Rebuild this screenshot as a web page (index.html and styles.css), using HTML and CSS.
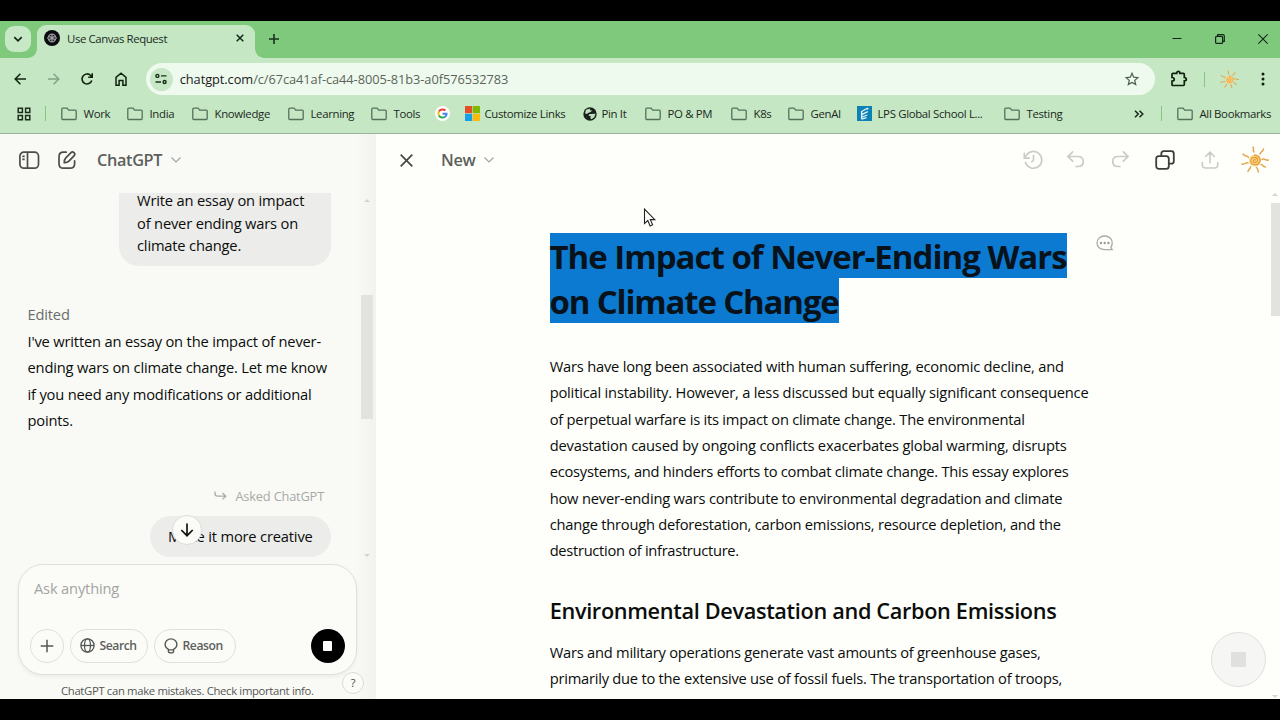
FILE: index.html
```html
<!DOCTYPE html>
<html lang="en">
<head>
<meta charset="utf-8">
<title>Use Canvas Request</title>
<link rel="stylesheet" href="styles.css">
</head>
<body>
<svg class="defs" aria-hidden="true">
  <symbol id="folder" viewBox="0 0 16 14"><path d="M1.7 1.2h4.4l1.6 1.9h6.6q.9 0 .9.9v7.6q0 .9-.9.9H1.700q-.9 0-.9-.9V2.100q0-.9.9-.9z" fill="none" stroke="#56705a" stroke-width="1.3"/></symbol>
  <symbol id="sun" viewBox="0 0 28 28">
    <circle cx="14" cy="14.500" r="6" fill="#fbd588"/>
    <path d="M14.300 14.500c.5-1.300-1.800-1.400-2 .1-.2 2.300 3.900 2.600 4.300-.2.300-3.500-5.700-4.300-6.700-.3-.8 4.900 6.900 6.400 8.800 1.900 1.600-4.400-2-7.300-5.600-6.900" fill="none" stroke="#e59f37" stroke-width="1.200"/>
    <path d="M13 6c-2-2 .6-2.600-1-5M19 8c.5-2.500 2.500-1.500 3.500-5M21 13.500c2.500-2 3.500 1.500 6.500.5M20 18.500c2 0 1.500 2.500 4.500 2.500M15.500 21.500c2 1.500.5 2.500 2 4.500M9.500 20.500c.500 2.500-2 2-2.500 5M7 17c-2.500-1-3 2-6 1M7.500 11.500c-1-2.500-3.500-.5-5.500-3.500" fill="none" stroke="#dfaa57" stroke-width="1.500" stroke-linecap="round"/>
  </symbol>
  <symbol id="chev" viewBox="0 0 12 8"><path d="M1.500 1.500 6 6l4.500-4.500" fill="none" stroke="currentColor" stroke-width="1.200"/></symbol>
</svg>

<div class="screen">
  <header class="tabstrip">
    <div class="tabsearch"><svg width="10" height="7" viewBox="0 0 10 7"><path d="M1.300 1.200 5 4.900l3.700-3.700" fill="none" stroke="#112513" stroke-width="1.700"/></svg></div>
    <div class="tab">
      <svg class="favicon" width="16" height="16" viewBox="0 0 16 16"><circle cx="8" cy="8" r="8" fill="#0c0c10"/><g fill="none" stroke="#a9aaae" stroke-width=".7"><ellipse cx="8" cy="6" rx="3.200" ry="1.900"/><ellipse cx="8" cy="6" rx="3.200" ry="1.900" transform="rotate(60 8 8)"/><ellipse cx="8" cy="6" rx="3.200" ry="1.900" transform="rotate(120 8 8)"/><ellipse cx="8" cy="6" rx="3.200" ry="1.900" transform="rotate(180 8 8)"/><ellipse cx="8" cy="6" rx="3.200" ry="1.900" transform="rotate(240 8 8)"/><ellipse cx="8" cy="6" rx="3.200" ry="1.900" transform="rotate(300 8 8)"/></g></svg>
      <span class="tab-title">Use Canvas Request</span>
      <svg class="tab-close" width="8" height="8" viewBox="0 0 8 8"><path d="m.7.7 6.600 6.600m0-6.600L.7 7.300" stroke="#14281a" stroke-width="1.500"/></svg>
    </div>
    <svg class="newtab" width="10" height="10" viewBox="0 0 10 10"><path d="M5 0v10M0 5h10" stroke="#17331a" stroke-width="1.600"/></svg>
    <div class="winctl">
      <svg width="10" height="10" viewBox="0 0 10 10"><path d="M.5 4.500h9" stroke="#142517"/></svg>
      <svg width="10" height="10" viewBox="0 0 10 10" fill="none" stroke="#142517" stroke-width="1.200"><rect x=".6" y="2.400" width="7" height="7" rx="1"/><path d="M2.700 2.200V.7h5.200q1.400 0 1.400 1.400v5.300H7.700"/></svg>
      <svg width="10" height="10" viewBox="0 0 10 10"><path d="m.4.4 9.200 9.200m0-9.200L.4 9.600" stroke="#142517" stroke-width="1.100"/></svg>
    </div>
  </header>

  <div class="toolbar">
    <svg width="12" height="12" viewBox="0 0 12 12" fill="none" stroke="#10230f" stroke-width="1.500"><path d="M12 6H1.200M6.400.800 1.200 6l5.200 5.200"/></svg>
    <svg width="12" height="12" viewBox="0 0 12 12" fill="none" stroke="#84a486" stroke-width="1.500"><path d="M0 6h10.800M5.600.800 10.800 6l-5.200 5.200"/></svg>
    <svg width="12" height="12" viewBox="0 0 12 12" fill="none" stroke="#10230f" stroke-width="1.600"><path d="M10.800 7.500A5 5 0 1 1 9.700 2.500l1.400 1.600M11.200.300v4H7.200"/></svg>
    <svg width="12" height="14" viewBox="0 0 12 14" fill="none" stroke="#10230f" stroke-width="1.500"><path d="M1 5.300 6 1.200l5 4.100v7.900H7.900V8.500H4.100v4.700H1z"/></svg>
    <div class="omnibox">
      <span class="site"><svg width="12" height="12" viewBox="0 0 12 12" fill="none" stroke="#17301b" stroke-width="1.400"><circle cx="2.400" cy="2.900" r="1.500"/><path d="M6 2.900h5.500M.500 9h5.500"/><circle cx="9.600" cy="9" r="1.500"/></svg></span>
      <span class="url">chatgpt.com<span class="path">/c/67ca41af-ca44-8005-81b3-a0f576532783</span></span>
      <svg class="star" width="14" height="14" viewBox="0 0 14 14"><path d="m7 1.300 1.700 3.900 4.200.4-3.200 2.800 1 4.200L7 10.400l-3.700 2.200 1-4.200L1.100 5.600l4.200-.4z" fill="none" stroke="#4b5e4d" stroke-width="1.200"/></svg>
    </div>
    <svg class="puzzle" width="16" height="16" viewBox="0 0 16 16"><path d="M1 3.200q0-.9.900-.9h3.800c0-2.500 3.200-2.500 3.200 0h3.500q.9 0 .9.900v3.300c2.700 0 2.700 3.300 0 3.300v3.800q0 .9-.9.900H1.900q-.9 0-.9-.9v-3.400c3 0 3-3.700 0-3.700z" fill="none" stroke="#10200f" stroke-width="1.700"/></svg>
    <i class="sep"></i>
    <svg class="profile" width="19" height="19"><use href="#sun"/></svg>
    <svg class="kebab" width="4" height="14" viewBox="0 0 4 14" fill="#10200f"><circle cx="2" cy="2" r="1.500"/><circle cx="2" cy="7" r="1.500"/><circle cx="2" cy="12" r="1.500"/></svg>
  </div>

  <nav class="bookmarks">
    <svg width="14" height="14" viewBox="0 0 14 14" fill="none" stroke="#1b2c1d" stroke-width="1.500"><path d="M1.200 1.200h4.200v4.200H1.200zM8.600 1.200h4.200v4.200H8.600zM1.200 8.600h4.200v4.200H1.200zM8.600 8.600h4.200v4.200H8.600z"/></svg>
    <i class="sep"></i>
    <a><svg width="16" height="14"><use href="#folder"/></svg>Work</a>
    <a><svg width="16" height="14"><use href="#folder"/></svg>India</a>
    <a><svg width="16" height="14"><use href="#folder"/></svg>Knowledge</a>
    <a><svg width="16" height="14"><use href="#folder"/></svg>Learning</a>
    <a><svg width="16" height="14"><use href="#folder"/></svg>Tools</a>
    <a class="google"><svg width="15" height="15" viewBox="0 0 15 15"><circle cx="7.500" cy="7.500" r="7.500" fill="#fff"/><g fill="none" stroke-width="2"><path d="M10.400 4.600A4.200 4.200 0 0 0 3.900 5.600" stroke="#e94235"/><path d="M3.900 5.500a4.200 4.200 0 0 0 0 4" stroke="#fabb05"/><path d="M3.900 9.500a4.200 4.200 0 0 0 6.200 1.200" stroke="#34a853"/><path d="M10 10.800a4 4 0 0 0 1.600-3.100H7.600" stroke="#4285f4"/></g></svg></a>
    <a><svg width="15" height="15" viewBox="0 0 15 15"><path fill="#e44e28" d="M0 0h7.200v7.200H0z"/><path fill="#7fba00" d="M7.800 0H15v7.200H7.800z"/><path fill="#17a2e8" d="M0 7.800h7.200V15H0z"/><path fill="#fab90b" d="M7.800 7.800H15V15H7.800z"/></svg>Customize Links</a>
    <a class="pin"><svg width="14" height="14" viewBox="0 0 14 14"><circle cx="7" cy="7" r="6.700" fill="#1a201c"/><path d="M3 2.700 7.200 1.400l-.4 1.800 2.500.4-1.800 1.500-2.300.9L3.800 7 2 6.200zM8 7l4.500-.3-1.200 3.500-2.800 2-1.300-1.300.7-1.600-2.300-.6L6.100 7.200z" fill="#bfe0bf"/></svg>Pin It</a>
    <a><svg width="16" height="14"><use href="#folder"/></svg>PO &amp; PM</a>
    <a><svg width="16" height="14"><use href="#folder"/></svg>K8s</a>
    <a><svg width="16" height="14"><use href="#folder"/></svg>GenAI</a>
    <a class="lps"><svg width="15" height="15" viewBox="0 0 15 15"><path fill="#0d82b4" d="M0 0h15v15H0z"/><path d="M5 5.300 10.800 2M5 8.300l5.800-2.600M5 11l5.300-2M4.500 13.200l5-1.500M4.600 5v8M10.800 2v1.500" stroke="#e4f5fb" stroke-width="1.300"/></svg>LPS Global School L...</a>
    <a><svg width="16" height="14"><use href="#folder"/></svg>Testing</a>
    <svg width="10" height="8" viewBox="0 0 10 8" fill="none" stroke="#16281a" stroke-width="1.500"><path d="m1 .7 3.300 3.300L1 7.300M5.500.700l3.300 3.300-3.300 3.300"/></svg>
    <i class="sep"></i>
    <a><svg width="16" height="14"><use href="#folder"/></svg>All Bookmarks</a>
  </nav>

  <main class="page">
    <section class="chat">
      <div class="chat-head">
        <svg width="22" height="20" viewBox="0 0 22 20" fill="none" stroke="#4b4d4a" stroke-width="1.700"><rect x="1.900" y="2.200" width="18.600" height="16" rx="4"/><path d="M9.500 2.300v16M4.300 6.300h2.400M4.300 9.300h2.400"/></svg>
        <svg class="edit" width="20" height="20" viewBox="0 0 20 20" fill="none" stroke="#4b4d4a" stroke-width="1.700" stroke-linecap="round"><path d="M9.200 2.200H6.500Q2 2.200 2 6.700v7Q2 18.200 6.500 18.200h6.600q4.500 0 4.500-4.500v-2.800"/><path d="M7.300 12.700c-.2-3 .3-3.700 1.500-4.900L14 2.600c1.900-1.700 5 .9 3.200 3.100l-5.300 5.500c-1.200 1.200-2.200 1.600-4.600 1.500z"/></svg>
        <span class="model">ChatGPT</span>
        <svg class="chev" width="12" height="8"><use href="#chev"/></svg>
      </div>
      <div class="thread">
        <div class="bubble first"><span>Write an essay on impact</span><span>of never ending wars on</span><span>climate change.</span></div>
        <div class="edited">Edited</div>
        <p class="reply"><span>I've written an essay on the impact of never-</span><span>ending wars on climate change. Let me know</span><span>if you need any modifications or additional</span><span>points.</span></p>
        <div class="asked"><svg width="13" height="10" viewBox="0 0 13 10" fill="none" stroke="#a9aba8" stroke-width="1.300"><path d="M1 .5v2.300q0 2.400 2.400 2.400h8M8.500 2l3.300 3.200-3.300 3.200"/></svg>Asked ChatGPT</div>
        <div class="bubble second">Make it more creative</div>
        <div class="down"><svg width="14" height="14" viewBox="0 0 14 14" fill="none" stroke="#111" stroke-width="1.700"><path d="M7 .500v12M1.300 7 7 12.700 12.700 7"/></svg></div>
        <i class="arrow up"></i><i class="thumb"></i><i class="arrow dn"></i>
      </div>
      <div class="composer">
        <div class="placeholder">Ask anything</div>
        <div class="actions">
          <span class="pill plus"><svg width="14" height="14" viewBox="0 0 14 14"><path d="M7 .700v12.600M.700 7h12.600" stroke="#555755" stroke-width="1.500"/></svg></span>
          <span class="pill search"><svg width="15" height="15" viewBox="0 0 15 15" fill="none" stroke="#555755" stroke-width="1.300"><circle cx="7.500" cy="7.500" r="6.600"/><ellipse cx="7.500" cy="7.500" rx="3" ry="6.600"/><path d="M1 7.500h13"/></svg>Search</span>
          <span class="pill reason"><svg width="14" height="16" viewBox="0 0 14 16" fill="none" stroke="#555755" stroke-width="1.400"><path d="M4.400 11.300C2 10 1.100 8.300 1.100 6.500 1.100 3.300 3.700.9 7 .9s5.900 2.400 5.900 5.600c0 1.800-.9 3.500-3.300 4.800v1.900q0 1.700-2.600 1.700t-2.600-1.700zM4.600 11.900h4.800"/></svg>Reason</span>
          <span class="stop"></span>
        </div>
      </div>
      <div class="disclaimer">ChatGPT can make mistakes. Check important info.</div>
      <div class="help">?</div>
    </section>

    <section class="canvas">
      <div class="canvas-head">
        <svg width="13" height="13" viewBox="0 0 13 13"><path d="m.7.7 11.600 11.600m0-11.600L.7 12.300" stroke="#454745" stroke-width="1.700"/></svg>
        <span class="doc">New</span>
        <svg class="chev" width="12" height="8"><use href="#chev"/></svg>
        <div class="tools">
          <svg width="20" height="20" viewBox="0 0 20 20" fill="none" stroke="#c9cbc8" stroke-width="1.600" stroke-linecap="round"><path d="M2.400 12.400A8.400 8.400 0 1 0 3.200 5.500L1.400 7.900M1.300 3.200v4.900h5M10.500 5.600v4.200q0 1.200-1.800 2"/></svg>
          <svg width="20" height="20" viewBox="0 0 20 20" fill="none" stroke="#c9cbc8" stroke-width="1.700" stroke-linecap="round"><path d="M6.600 1.900 2 6.500l4.600 4.600M2 6.500h9.700q5.600 0 5.600 5t-5.600 5h-1.600"/></svg>
          <svg width="20" height="20" viewBox="0 0 20 20" fill="none" stroke="#c9cbc8" stroke-width="1.700" stroke-linecap="round"><path d="m13.400 1.900 4.600 4.600-4.600 4.600M18 6.500H8.300q-5.600 0-5.600 5t5.600 5h1.600"/></svg>
          <svg width="20" height="20" viewBox="0 0 20 20" fill="none" stroke="#3c3e3c" stroke-width="1.800"><rect x="1.200" y="6.200" width="12.600" height="12.600" rx="2.600"/><path d="M6.300 6V3.700q0-2.500 2.500-2.500h7.500q2.500 0 2.500 2.500v7.500q0 2.500-2.500 2.500H14"/></svg>
          <svg width="20" height="20" viewBox="0 0 20 20" fill="none" stroke="#c9cbc8" stroke-width="1.600" stroke-linecap="round"><path d="M10 12.700V2.400M5.600 6.500 10 2.100l4.400 4.400M2.300 12.500v2.200q0 3.300 3.300 3.300h8.800q3.300 0 3.300-3.300v-2.200"/></svg>
          <svg class="avatar" width="28" height="28"><use href="#sun"/></svg>
        </div>
      </div>
      <article>
        <h1><span>The Impact of Never-Ending Wars</span><br><span>on Climate Change</span></h1>
        <p class="one"><span>Wars have long been associated with human suffering, economic decline, and</span><span>political instability. However, a less discussed but equally significant consequence</span><span>of perpetual warfare is its impact on climate change. The environmental</span><span>devastation caused by ongoing conflicts exacerbates global warming, disrupts</span><span>ecosystems, and hinders efforts to combat climate change. This essay explores</span><span>how never-ending wars contribute to environmental degradation and climate</span><span>change through deforestation, carbon emissions, resource depletion, and the</span><span>destruction of infrastructure.</span></p>
        <h2>Environmental Devastation and Carbon Emissions</h2>
        <p class="two"><span>Wars and military operations generate vast amounts of greenhouse gases,</span><span>primarily due to the extensive use of fossil fuels. The transportation of troops,</span></p>
      </article>
      <svg class="comment" width="18" height="16" viewBox="0 0 18 16" fill="none" stroke="#a9aba9" stroke-width="1.300"><path d="M16.200 14.700H8.800C4 14.700 1 11.700 1 8s3-7 7.600-7 7.600 3.200 7.600 7c0 2-.7 3.500-1.400 4.400z"/><g fill="#999b99" stroke="none"><circle cx="5" cy="8" r="1.200"/><circle cx="8.700" cy="8" r="1.200"/><circle cx="12.400" cy="8" r="1.200"/></g></svg>
      <svg class="cursor" width="14" height="20" viewBox="0 0 14 20"><path d="M1.500 1v14.600l3.300-3.100 2.300 5.400 2.500-1.100-2.300-5.200h4.500z" fill="#fff" stroke="#222" stroke-width="1.100"/></svg>
      <div class="fab"></div>
      <i class="arrow up"></i><i class="thumb"></i><i class="arrow dn"></i>
    </section>
  </main>
</div>
</body>
</html>
```
FILE: styles.css
```css
* { box-sizing: border-box; }
body { margin: 0; width: 1280px; height: 720px; overflow: hidden; background: #000; color: #111; font-family: "Open Sans", "Noto Sans", sans-serif; }
svg { display: block; flex: none; overflow: visible; }
.defs { position: absolute; width: 0; height: 0; }
.screen { margin-top: 21px; height: 678px; display: flex; flex-direction: column; overflow: hidden; }

/* tab strip */
.tabstrip { height: 37px; background: #7fc97c; display: flex; align-items: center; padding: 0 0 1px 5px; }
.tabsearch { width: 26px; height: 26px; border-radius: 9px; background: #c6e8c5; display: flex; align-items: center; justify-content: center; }
.tab { position: relative; margin-left: 6px; width: 218px; height: 33px; margin-top: 5px; background: #c6e7c4; border-radius: 9px 9px 0 0; display: flex; align-items: center; padding: 0 11px 7px 7px; }
.tab::before, .tab::after { content: ""; position: absolute; bottom: 0; width: 9px; height: 9px; }
.tab::before { left: -9px; background: radial-gradient(circle at 0 0, transparent 8.500px, #c6e7c4 9px); }
.tab::after { right: -9px; background: radial-gradient(circle at 100% 0, transparent 8.500px, #c6e7c4 9px); }
.tab-title { margin-left: 7px; flex: 1; font-size: 11.400px; letter-spacing: -.4px; color: #1a2b1c; white-space: nowrap; }
.newtab { margin-left: 14px; }
.winctl { margin-left: auto; display: flex; gap: 33px; padding-right: 12px; }

/* toolbar */
.toolbar { height: 43px; background: #c6e7c4; display: flex; align-items: center; padding: 0 0 1px 14px; gap: 21.700px; }
.omnibox { width: 1009px; height: 32px; border-radius: 16px; background: #eefaee; display: flex; align-items: center; padding: 0 16px 0 4px; margin-left: -3px; }
.site { width: 23px; height: 23px; border-radius: 50%; background: #c8e7c7; display: grid; place-items: center; }
.url { margin-left: 7px; flex: 1; font-size: 12.800px; letter-spacing: -.06px; color: #1a211a; }
.path { color: #5b655b; }
.sep { width: 1px; height: 15px; background: #86c585; }
.toolbar .puzzle { margin-left: -5px; }
.toolbar .sep { margin-left: -5px; }
.toolbar .profile { margin-left: -7px; }
.toolbar .kebab { margin-left: 0; }

/* bookmarks */
.bookmarks { height: 33px; background: #c6e7c4; border-bottom: 1px solid #97b595; display: grid; align-items: center; padding: 0 0 7px 16.500px; font-size: 11.400px; letter-spacing: -.33px; color: #1b291c; white-space: nowrap;
  grid-template-columns: 28px 16px 66px 65px 96px 83px 65px 29px 118px 62px 86px 57px 69px 147px 130px 27px 16px 103px; }
.bookmarks a { display: flex; align-items: center; gap: 7px; }
.bookmarks .google { margin-left: -1px; }
.bookmarks .pin, .bookmarks a:nth-of-type(7) { gap: 5px; }
.bookmarks .lps { gap: 6px; }

/* page */
.page { flex: 1; min-height: 0; display: flex; background: #fefffb; }
.chat { position: relative; width: 376px; background: linear-gradient(90deg, #f9faf6 355px, #f2f3ef 376px); }
.chat-head { height: 59px; display: flex; align-items: center; padding: 0 0 7px 18px; }
.chat-head .edit { margin-left: 17px; }
.model, .doc { font-size: 16.300px; font-weight: 600; color: #5d5f5c; letter-spacing: -.35px; }
.model { margin-left: 20px; }
.chev { color: #a2a4a1; margin-left: 8px; }
.thread { position: relative; height: 371px; font-size: 14.700px; color: #0b0d0b; letter-spacing: -.18px; }
.bubble { background: #ececea; }
.bubble span, article p span, .reply span { display: block; white-space: nowrap; }
.first { width: 212px; height: 73px; margin-left: 119px; border-radius: 0 0 20px 20px; padding: 0 0 0 18px; line-height: 22.600px; }
.first span { position: relative; top: -4px; }
.edited { margin: 36px 0 0 27.500px; line-height: 24px; color: #6b6d6a; }
.reply { margin: 2px 0 0 27.500px; line-height: 26.300px; }
.asked { display: flex; align-items: center; justify-content: flex-end; gap: 8px; margin: 53px 52px 0 0; line-height: 20px; font-size: 12.800px; color: #a7a9a6; }
.second { width: 181px; height: 41px; line-height: 41px; border-radius: 21px; margin: 10px 0 0 150px; padding-left: 18px; white-space: nowrap; }
.down { position: absolute; left: 172px; top: 322px; width: 30px; height: 30px; border-radius: 50%; border: 1px solid #dcddda; background: #fbfcf8; display: grid; place-items: center; }
.thumb { position: absolute; width: 12px; background: #e2e3df; }
.arrow { position: absolute; width: 0; height: 0; border: 3.500px solid transparent; }
.arrow.up { border-bottom-color: #d3d4d1; border-top: 0; }
.arrow.dn { border-top-color: #d3d4d1; border-bottom: 0; }
.thread .arrow { left: 364px; }
.thread .up { top: 6px; }
.thread .dn { bottom: 7px; }
.thread .thumb { left: 361px; top: 102px; height: 124px; }
.composer { position: relative; width: 339px; height: 111px; margin-left: 18px; border: 1px solid #dfe0dd; border-radius: 25px; background: #fbfcf8; box-shadow: 0 2px 4px #0000000f; padding: 13px 11.500px 11px 11px; display: flex; flex-direction: column; justify-content: space-between; }
.placeholder { padding-left: 4px; font-size: 14.700px; line-height: 21px; letter-spacing: -.18px; color: #a3a5a2; }
.actions { display: flex; align-items: center; gap: 5.500px; }
.pill { height: 34px; border: 1px solid #dfe0dd; border-radius: 17px; display: flex; align-items: center; gap: 5px; font-size: 12.200px; font-weight: 600; letter-spacing: -.45px; color: #5d5f5c; padding: 0 0 1px 9px; }
.plus { width: 34px; }
.search { width: 78px; }
.reason { width: 82px; margin-left: .5px; }
.stop { width: 34px; height: 34px; border-radius: 50%; background: #000; margin-left: auto; display: grid; place-items: center; }
.stop::after { content: ""; width: 9px; height: 10px; background: #fff; border-radius: 1px; }
.disclaimer { margin: 8px 0 0 61px; font-size: 11.300px; line-height: 16px; letter-spacing: -.33px; color: #555755; white-space: nowrap; }
.help { position: absolute; left: 342px; top: 538px; width: 22px; height: 22px; border-radius: 50%; border: 1px solid #dcddda; background: #fbfcf8; font-size: 11px; line-height: 20px; text-align: center; color: #3f413f; }

.canvas { position: relative; flex: 1; overflow: hidden; }
.canvas-head { height: 59px; display: flex; align-items: center; padding: 0 11px 7px 24px; }
.doc { margin-left: 28px; }
.tools { margin-left: auto; display: flex; align-items: center; gap: 23.500px; }
.tools svg:nth-child(4) { margin-left: 2px; }
.tools svg:nth-child(5) { margin-left: 1px; }
.tools .avatar { margin-left: -2px; }
article { margin-left: 173.700px; padding-top: 40px; color: #0b0d0b; }
h1 { margin: 0 0 0 -.200px; font-size: 33px; line-height: 47px; font-weight: 700; letter-spacing: -1px; white-space: nowrap; color: #08121b; height: 90px; }
h1 span { display: inline-block; height: 45px; background: #0b7ad0; vertical-align: top; line-height: 48px; }
h1 br { line-height: 0; }
h1 { line-height: 45px; }
h1 span:last-child { letter-spacing: -1.170px; }
article p { margin: 0; font-size: 14.700px; line-height: 26.350px; letter-spacing: -.24px; }
.one { padding-top: 30px; }
.one span:nth-child(1) { letter-spacing: -.215px; }
.one span:nth-child(2) { letter-spacing: -.198px; }
.one span:nth-child(3) { letter-spacing: -.226px; }
.one span:nth-child(4) { letter-spacing: -.186px; }
.one span:nth-child(5) { letter-spacing: -.248px; }
.one span:nth-child(6) { letter-spacing: -.203px; }
.one span:nth-child(7) { letter-spacing: -.240px; }
.one span:nth-child(8) { letter-spacing: -.300px; }
h2 { margin: 31px 0 12px; font-size: 21.700px; line-height: 32px; font-weight: 600; letter-spacing: -.335px; }
.comment { position: absolute; left: 720px; top: 100.500px; }
.cursor { position: absolute; left: 267px; top: 74px; }
.fab { position: absolute; left: 835px; top: 498px; width: 55px; height: 55px; border-radius: 50%; border: 1px solid #dfe0de; background: #f6f7f4; display: grid; place-items: center; }
.fab::after { content: ""; width: 15px; height: 15px; border-radius: 1px; background: #e0e1de; }
.canvas .arrow { left: 896px; }
.canvas > .up { top: 59px; }
.canvas > .dn { bottom: 1px; }
.canvas > .thumb { left: 895px; top: 69px; height: 113px; width: 9px; }
```
